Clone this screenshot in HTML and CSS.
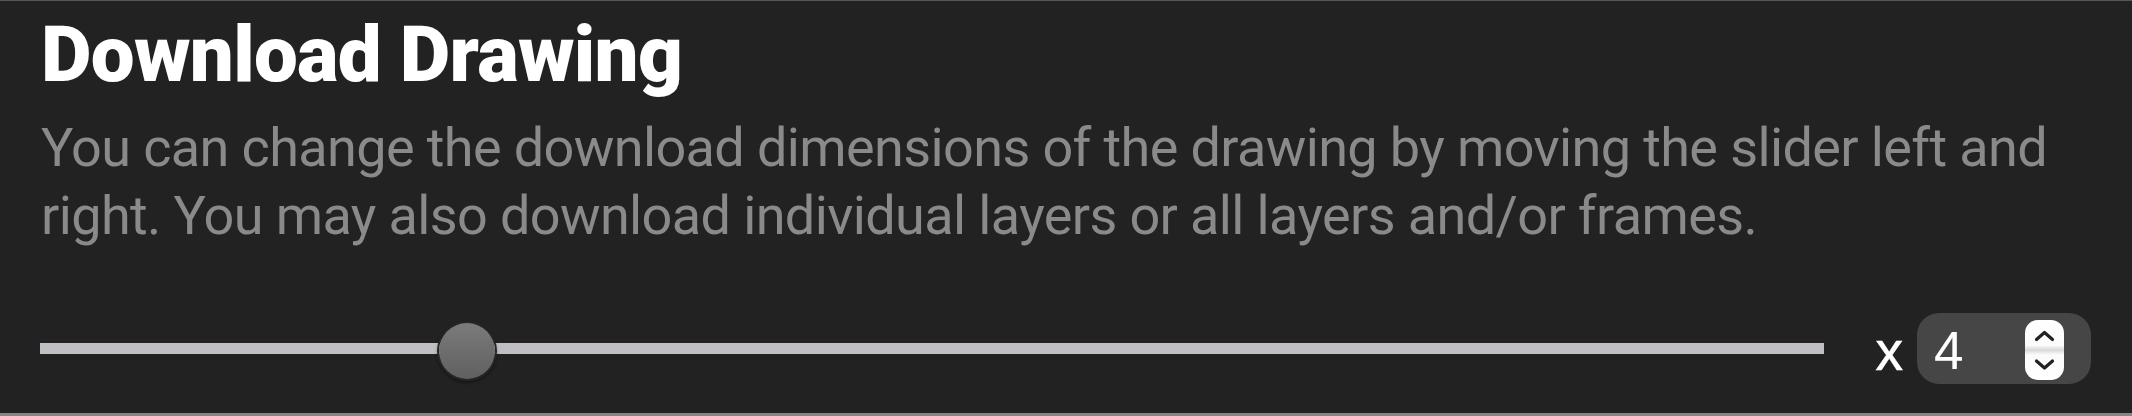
FILE: index.html
```html
<!DOCTYPE html>
<html lang="en">
<head>
<meta charset="utf-8">
<title>Download Drawing</title>
<link rel="stylesheet" href="styles.css">
</head>
<body>
<section class="panel">
  <h1 class="title">Download Drawing</h1>
  <p class="desc">You can change the download dimensions of the drawing by moving the slider left and right. You may also download individual layers or all layers and/or frames.</p>
  <div class="controls">
    <div class="slider">
      <div class="track"></div>
      <div class="knob" style="left: 23.95%"></div>
    </div>
    <span class="times">x</span>
    <div class="number">
      <span class="value">4</span>
      <svg class="stepper" width="39" height="60" viewBox="0 0 39 60">
        <defs>
          <linearGradient id="stepGrad" x1="0" y1="0" x2="0" y2="1">
            <stop offset="0" stop-color="#ffffff"/>
            <stop offset="0.42" stop-color="#fbfbfb"/>
            <stop offset="0.5" stop-color="#d8d8d8"/>
            <stop offset="0.58" stop-color="#fbfbfb"/>
            <stop offset="1" stop-color="#ffffff"/>
          </linearGradient>
        </defs>
        <rect x="0" y="0" width="39" height="60" rx="13" ry="13" fill="url(#stepGrad)"/>
        <path d="M11.5 19.5 L19.5 12.5 L27.5 19.5" fill="none" stroke="#222222" stroke-width="3.2" stroke-linecap="round" stroke-linejoin="round"/>
        <path d="M11.5 41 L19.5 48 L27.5 41" fill="none" stroke="#222222" stroke-width="3.2" stroke-linecap="round" stroke-linejoin="round"/>
      </svg>
    </div>
  </div>
</section>
</body>
</html>
```
FILE: styles.css
```css
html, body {
  margin: 0;
  padding: 0;
  background: #222222;
}

.panel {
  box-sizing: border-box;
  width: 2132px;
  height: 416px;
  background: #222222;
  border-top: 1px solid #575757;
  border-bottom: 3px solid #858585;
  padding: 15px 41px 0 41px;
  font-family: Roboto, "Liberation Sans", sans-serif;
}

.title {
  margin: 0;
  font-family: Roboto, "Liberation Sans", sans-serif;
  font-weight: 900;
  font-size: 78px;
  line-height: 78px;
  color: #ffffff;
  letter-spacing: -0.7px;
}

.desc {
  margin: 20px 0 0 0;
  font-family: Roboto, "Liberation Sans", sans-serif;
  font-weight: 400;
  font-size: 54px;
  line-height: 68px;
  letter-spacing: -0.62px;
  color: #8a8a8a;
}

.controls {
  display: flex;
  align-items: center;
  margin-top: 63px;
  height: 71px;
}

.slider {
  position: relative;
  flex: 1;
  height: 60px;
  display: flex;
  align-items: center;
  margin-left: -1px;
  margin-right: 52px;
}

.track {
  width: 100%;
  height: 11px;
  background: #c1bfc3;
}

.knob {
  position: absolute;
  top: 4px;
  width: 56px;
  height: 56px;
  margin-left: -28px;
  border-radius: 50%;
  background: linear-gradient(#7b7b7b, #606060);
  box-shadow: 0 0 0 2px #262626, 0 2px 3px 2px rgba(0, 0, 0, 0.35);
}

.times {
  font-family: "Liberation Sans", Arial, sans-serif;
  font-size: 55px;
  line-height: 54px;
  color: #ffffff;
  margin-right: 14px;
  margin-top: 4px;
  -webkit-text-stroke: 0.6px #ffffff;
}

.number {
  box-sizing: border-box;
  width: 174px;
  height: 71px;
  border-radius: 22px;
  background: #464646;
  display: flex;
  align-items: center;
  justify-content: space-between;
  padding: 0 27px 0 17px;
}

.value {
  font-family: "Liberation Sans", Arial, sans-serif;
  font-size: 53px;
  line-height: 53px;
  color: #ffffff;
  margin-top: 4px;
}

.stepper {
  display: block;
  margin-top: 2px;
}
```
